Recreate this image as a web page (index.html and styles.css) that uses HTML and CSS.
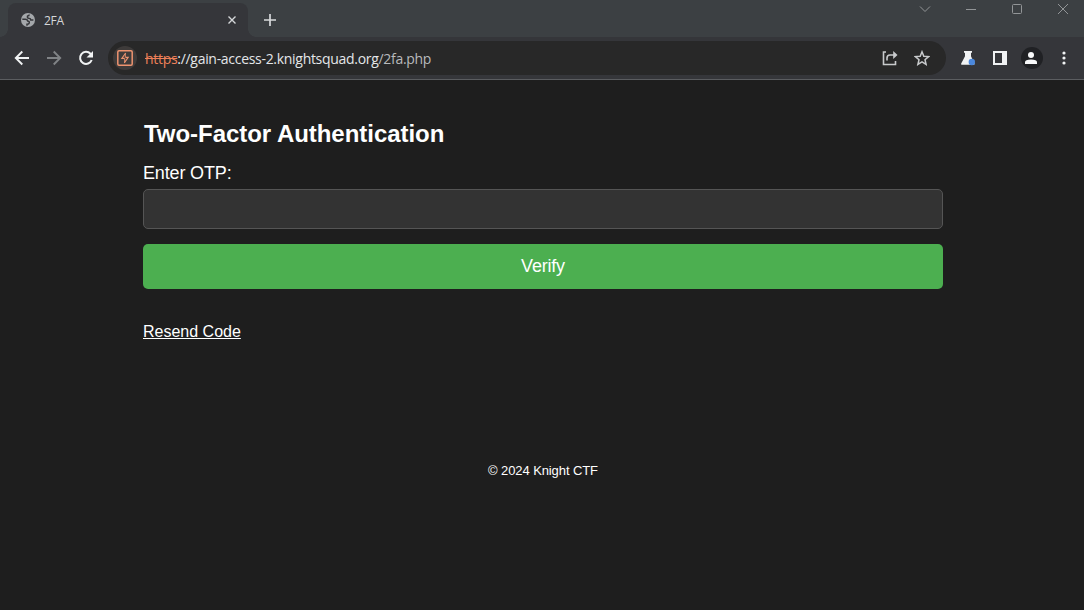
FILE: index.html
```
<!DOCTYPE html>
<html lang="en">
<head>
<meta charset="utf-8">
<title>2FA</title>
<link rel="stylesheet" href="styles.css">
</head>
<body>
<div class="window">
  <header class="tabstrip">
    <div class="tab">
      <svg class="globe" width="14" height="14" viewBox="0 0 14 14"><circle cx="7" cy="7" r="7" fill="#a4a7aa"/><path d="M1.300 6.300h3.200q1.800 0 2.200 1.800 1.800 0 1.600 1.700-.3 1.500-2.300 1.400v1.600M8.200 1.500q0 1.500-1.700 1.600-.5 1.800 1.300 2.200 2 .2 2 1.600h2.600" fill="none" stroke="#35363a" stroke-width="1.500"/></svg>
      <span class="tab-title">2FA</span>
      <svg class="tab-close" width="10" height="10" viewBox="0 0 10 10"><path d="M1.500 1.500l7 7m0-7l-7 7" stroke="#d5d7d9" stroke-width="1.400"/></svg>
    </div>
    <svg class="new-tab" width="14" height="14" viewBox="0 0 14 14"><path d="M7 1v12M1 7h12" stroke="#d8dadc" stroke-width="1.700"/></svg>
    <div class="window-controls">
      <svg width="12" height="12" viewBox="0 0 12 12"><path d="M1 3.500l5 5 5-5"/></svg>
      <svg width="12" height="12" viewBox="0 0 12 12"><path d="M1 6.500h10"/></svg>
      <svg width="12" height="12" viewBox="0 0 12 12"><rect x="1.500" y="1.500" width="9" height="9" rx="1"/></svg>
      <svg width="12" height="12" viewBox="0 0 12 12"><path d="M1 1l10 10M11 1L1 11"/></svg>
    </div>
  </header>
  <nav class="toolbar">
    <div class="nav-buttons">
      <svg width="16" height="16" viewBox="0 0 16 16"><path d="M15 8H2M8.300 1.500L1.800 8l6.500 6.500" fill="none" stroke="#f1f3f4" stroke-width="1.900"/></svg>
      <svg width="16" height="16" viewBox="0 0 16 16"><path d="M1 8h13M7.700 1.500L14.200 8l-6.500 6.500" fill="none" stroke="#808386" stroke-width="1.900"/></svg>
      <svg width="16" height="16" viewBox="0 0 16 16"><path d="M13.700 10a6 6 0 1 1-1.200-6.200L14 5.300" fill="none" stroke="#f1f3f4" stroke-width="2"/><path d="M15 1v6.500H8.500z" fill="#f1f3f4"/></svg>
    </div>
    <div class="address">
      <span class="site-badge"><svg width="16" height="16" viewBox="0 0 16 16"><rect x=".8" y=".8" width="14.400" height="14.400" rx="1.200" fill="none" stroke="#ed936f" stroke-width="1.500"/><path d="M8.700 3L4.800 8.400h2.700M8.500 7.400h2.700L7.300 12.900" fill="none" stroke="#ed936f" stroke-width="1.100"/><path d="M8.300 3.500v3.900M7.700 8.400v4" stroke="#ed936f" stroke-width=".9"/></svg></span>
      <span class="url"><span class="scheme">https</span>://gain-access-2.knightsquad.org<span class="path">/2fa.php</span></span>
      <svg class="share" width="16" height="16" viewBox="0 0 16 16"><path d="M4 2H1.500v12.500h12V11M5 10.500V8q0-3 3-3h5" fill="none" stroke="#c8cacc" stroke-width="1.600"/><path d="M11.200 1L15.500 5l-4.300 4z" fill="#c8cacc"/></svg>
      <svg width="16" height="16" viewBox="0 0 16 16"><path d="M8 1.800l1.800 4.400 4.800.4-3.600 3.100 1.100 4.700L8 11.900l-4.100 2.500L5 9.700 1.400 6.600l4.800-.4z" fill="none" stroke="#c8cacc" stroke-width="1.500"/></svg>
    </div>
    <div class="actions">
      <svg width="16" height="16" viewBox="0 0 16 16"><path d="M4 1h8v1.800h-1v3.400l3.500 7.200q.4 1.200-.8 1.400H2q-1.500-.2-.8-1.400L5 6.200V2.800H4z" fill="#f1f3f4"/><circle cx="11.800" cy="12" r="3.200" fill="#4b88dd"/></svg>
      <svg width="16" height="16" viewBox="0 0 16 16"><path d="M1 1h14v14H1zM3 3v10h7V3z" fill="#f1f3f4" fill-rule="evenodd"/></svg>
      <span class="avatar"><svg width="12" height="12" viewBox="0 0 12 12" fill="#f8f9fa"><circle cx="6" cy="3" r="3"/><path d="M0 12v-1.800Q0 7.500 6 7.500t6 2.700V12z"/></svg></span>
      <svg width="16" height="16" viewBox="0 0 16 16" fill="#f1f3f4"><circle cx="8" cy="3" r="1.600"/><circle cx="8" cy="8" r="1.600"/><circle cx="8" cy="13" r="1.600"/></svg>
    </div>
  </nav>
  <main class="page">
    <form class="otp-form">
      <h1>Two-Factor Authentication</h1>
      <label for="otp">Enter OTP:</label>
      <input id="otp" type="text">
      <button type="button">Verify</button>
    </form>
    <a class="resend" href="#">Resend Code</a>
    <footer>© 2024 Knight CTF</footer>
  </main>
</div>
</body>
</html>
```
FILE: styles.css
```
* { box-sizing: border-box; }
body { margin: 0; background: #1e1e1e; color: #fff; font-family: "Liberation Sans", Arial, sans-serif; }
svg { display: block; flex: none; }
.window { height: 610px; display: flex; flex-direction: column; overflow: hidden; }
.tabstrip { height: 37px; flex: none; display: flex; background: #3c4043; padding: 3px 15px 0 8px; }
.tab { width: 240px; height: 34px; border-radius: 8px 8px 0 0; background: #35363a; display: flex; align-items: center; padding: 0 11px 0 13px; position: relative; }
.tab::before, .tab::after { content: ""; position: absolute; bottom: 0; width: 8px; height: 8px; }
.tab::before { left: -8px; background: radial-gradient(circle at 0 0, transparent 7.5px, #35363a 8px); }
.tab::after { right: -8px; background: radial-gradient(circle at 100% 0, transparent 7.5px, #35363a 8px); }
.tab-title { flex: 1; margin-left: 9px; font: 12px "Open Sans", sans-serif; letter-spacing: -.3px; color: #d5d7d9; }
.new-tab { margin: 10px 0 0 15px; }
.window-controls { margin-left: auto; display: flex; gap: 34px; fill: none; stroke: #929597; stroke-width: 1; }
.toolbar { height: 43px; flex: none; display: flex; align-items: center; background: #35363a; border-bottom: 1px solid #5b5d60; padding: 0 12px 0 14px; }
.nav-buttons { display: flex; gap: 16px; }
.address { width: 838px; height: 34px; margin-left: 14px; border-radius: 17px; background: #282828; display: flex; align-items: center; gap: 16px; padding: 0 16px 0 5px; }
.site-badge { width: 24px; height: 24px; border-radius: 50%; background: #3e3b3a; display: grid; place-items: center; }
.url { flex: 1; margin-left: -8px; font: 14px "Open Sans", sans-serif; letter-spacing: -.3px; color: #e4e6e8; white-space: nowrap; }
.scheme { color: #ee8058; text-decoration: line-through; }
.path { color: #b8babc; }
.actions { flex: 1; display: flex; align-items: center; gap: 13px; padding-left: 14px; }
.actions svg:first-child { margin-right: 3px; }
.avatar { width: 22px; height: 22px; border-radius: 50%; background: #202124; display: grid; place-items: center; }
.page { width: 800px; margin-left: 143px; padding-top: 40px; display: flex; flex-direction: column; }
.otp-form { display: flex; flex-direction: column; }
h1 { margin: 0 0 15px 1px; font-size: 24px; line-height: 28px; letter-spacing: -.04px; }
label { font-size: 18px; line-height: 20px; margin-bottom: 6px; letter-spacing: -.15px; }
input { width: 100%; height: 40px; border: 1px solid #555; border-radius: 5px; background: #333; color: #fff; padding: 0 10px; font: inherit; outline: none; }
button { width: 100%; height: 45px; margin-top: 15px; border: 0; border-radius: 5px; background: #4caf50; color: #fff; font: 18px "Liberation Sans", Arial, sans-serif; letter-spacing: -.2px; }
.resend { align-self: flex-start; margin-top: 34px; font-size: 16px; line-height: 18px; color: #fff; }
footer { margin-top: 122px; text-align: center; font-size: 13px; line-height: 16px; letter-spacing: -.1px; }
```
